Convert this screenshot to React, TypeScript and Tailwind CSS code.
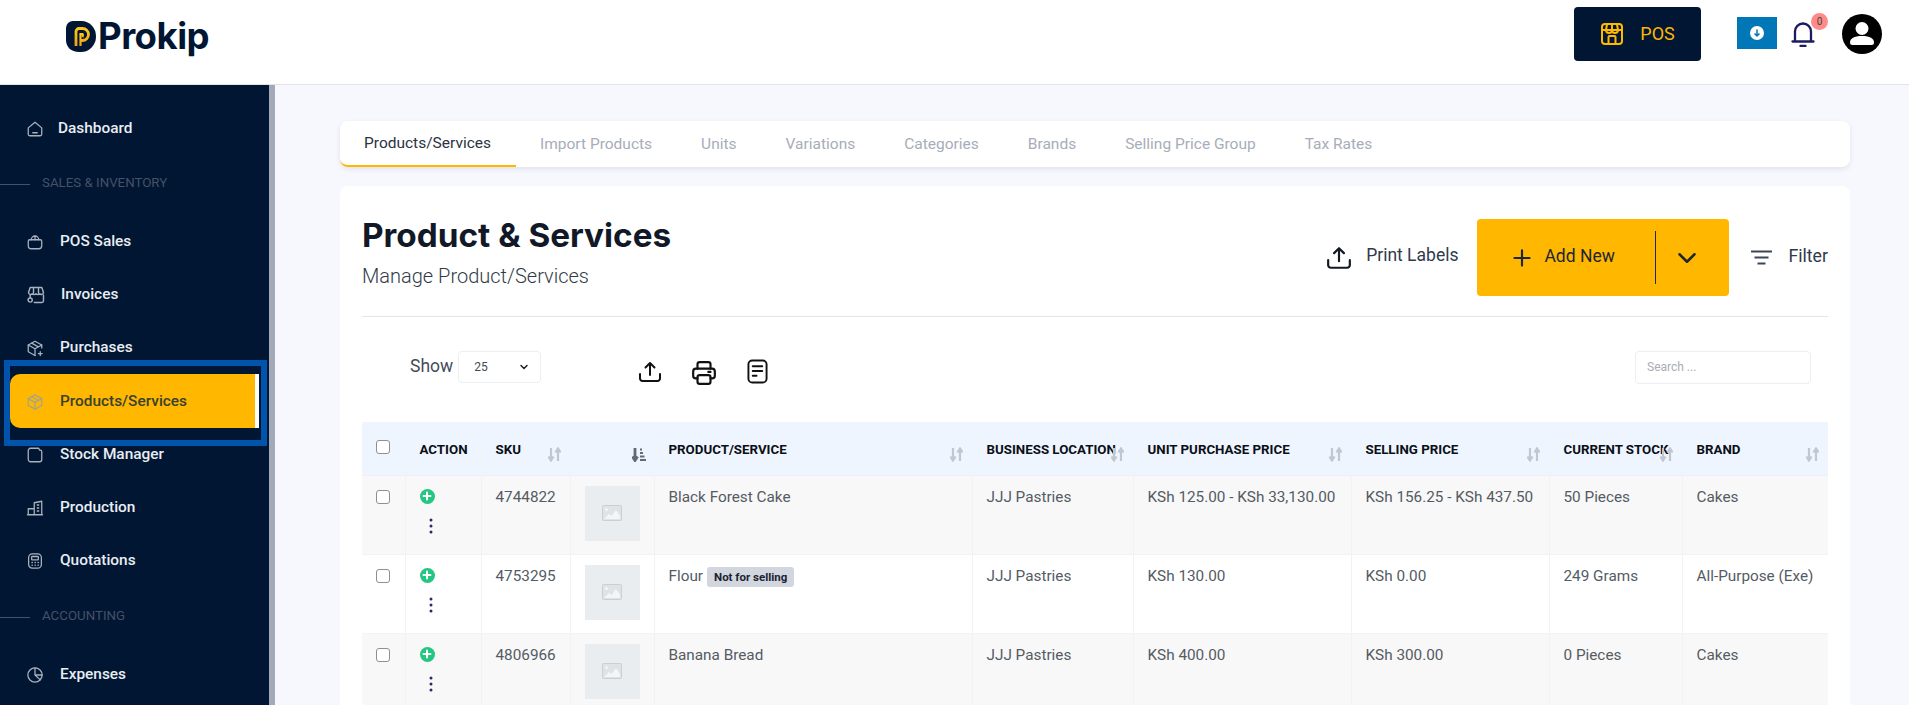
import { ChevronDown, Plus } from "lucide-react";
import type { ReactNode } from "react";

const ic = "w-[18px] h-[18px] shrink-0 text-[#a9b1be]";

function Ico({ children, className = ic }: { children: ReactNode; className?: string }) {
  return (
    <svg viewBox="0 0 24 24" fill="none" stroke="currentColor" strokeWidth="1.7" strokeLinecap="round" strokeLinejoin="round" className={className}>
      {children}
    </svg>
  );
}

const HomeIcon = () => (
  <Ico>
    <path d="M3 10.500 12 3l9 7.500V19a2 2 0 0 1-2 2H5a2 2 0 0 1-2-2z" />
    <path d="M9 17h6" />
  </Ico>
);
const BagIcon = () => (
  <Ico>
    <path d="M5 9h14a2 2 0 0 1 2 2v6a4 4 0 0 1-4 4H7a4 4 0 0 1-4-4v-6a2 2 0 0 1 2-2z" />
    <path d="M7 9a5 5 0 0 1 10 0M12 4v5" />
  </Ico>
);
const StoreIcon = () => (
  <Ico className="w-[20px] h-[20px] shrink-0 text-[#a9b1be]">
    <path d="M5 3h14l2 6a2.600 2.600 0 0 1-4.500 1.500 3 3 0 0 1-4.500 0 3 3 0 0 1-4.500 0A2.600 2.600 0 0 1 3 9z" />
    <path d="M9 3v7M15 3v7M5 12v3M10 21h9a2 2 0 0 0 2-2v-7" />
    <circle cx="5" cy="18" r="2.500" />
  </Ico>
);
const BoxPlusIcon = () => (
  <Ico>
    <path d="M21 12V8l-9-5-9 5v9l9 5" />
    <path d="m3 8 9 5 9-5M12 13v9M7.500 5.500l9 5" />
    <path d="M19 17v5M16.500 19.500h5" />
  </Ico>
);
const BoxIcon = () => (
  <Ico className="w-[18px] h-[18px] shrink-0 text-[#a8a48a]">
    <path d="m12 2.500 9 5v9l-9 5-9-5v-9z" />
    <path d="m3 7.500 9 5 9-5M12 12.500v9M7.500 5l9 5" />
  </Ico>
);
const FolderIcon = () => (
  <Ico>
    <path d="M6 3h11l1 2.500h1a2 2 0 0 1 2 2V18a3 3 0 0 1-3 3H6a3 3 0 0 1-3-3V6a3 3 0 0 1 3-3z" />
  </Ico>
);
const BuildingIcon = () => (
  <Ico>
    <path d="M3 21V13h8M11 21V5l10-2v18zM2 21h20" />
    <path d="M15 8h2M15 12h2M15 16h2" />
  </Ico>
);
const CalcIcon = () => (
  <Ico>
    <rect x="3.500" y="2.500" width="17" height="19" rx="5" />
    <rect x="7.500" y="6" width="9" height="4.500" rx="1" />
    <path d="M8 14h.500M12 14h.500M16 14h.500M8 17.500h.500M12 17.500h.500M16 17.500h.500" />
  </Ico>
);
const PieIcon = () => (
  <Ico>
    <circle cx="12" cy="12" r="9.500" />
    <path d="M12 2.500V12l7 6.500M12 12h9.500" />
  </Ico>
);

const UploadIcon = ({ className }: { className: string }) => (
  <svg viewBox="0 0 24 24" fill="none" stroke="currentColor" strokeWidth="2" strokeLinecap="round" strokeLinejoin="round" className={className}>
    <path d="M12 15V3M7.500 7.500 12 3l4.500 4.500" />
    <path d="M2 14v4.500A2.500 2.500 0 0 0 4.500 21h15a2.500 2.500 0 0 0 2.500-2.500V14" />
  </svg>
);

const SortIcon = () => (
  <svg viewBox="0 0 13 15" className="absolute right-[9px] top-[25px] w-[13px] h-[15px] text-[#c2c7cf]" fill="none" stroke="currentColor" strokeWidth="2.200">
    <path d="M3 1v12M.4 9.500 3 13.500l2.600-4" />
    <path d="M10 14V2M7.400 5.500 10 1.500l2.600 4" />
  </svg>
);

const SortActiveIcon = () => (
  <svg viewBox="0 0 14 15" className="absolute right-[8px] top-[25px] w-[14px] h-[15px] text-[#646a73]" fill="none" stroke="currentColor" strokeWidth="2.800">
    <path d="M3 1v12M.4 9.500 3 13.500l2.600-4" />
    <path d="M8 2.500h2M8 6h3M8 9.500h4.500M8 13h6" strokeWidth="2.200" />
  </svg>
);

const PhotoIcon = () => (
  <svg viewBox="0 0 20 16" className="w-5 h-4 text-[#c9cfd4]">
    <rect x="0.500" y="0.500" width="19" height="15" rx="1" fill="#dfe3e6" stroke="currentColor" />
    <circle cx="4.500" cy="4.500" r="1.500" fill="#f4f5f6" />
    <path d="M2 14l5-5 2.500 2L14 5l4 6v3z" fill="#f4f5f6" />
  </svg>
);

const AddCircle = () => (
  <span className="w-[15px] h-[15px] rounded-full bg-[#24c781] flex items-center justify-center">
    <Plus className="w-3 h-3 text-white" strokeWidth={4} />
  </span>
);

function NavItem({ icon, label, gap = "gap-[14px]" }: { icon: ReactNode; label: string; gap?: string }) {
  return (
    <div className={`h-[53px] flex items-center pl-[26px] pt-[1px] ${gap} text-[15.400px] font-medium text-[#e9edf2]`}>
      {icon}
      <span>{label}</span>
    </div>
  );
}

function NavLabel({ text, className }: { text: string; className: string }) {
  return (
    <div className={`flex items-center gap-[12px] text-[13.300px] text-[#465166] ${className}`}>
      <span className="w-[30px] h-px bg-[#465166] mt-[3px]" />
      <span>{text}</span>
    </div>
  );
}

const headers = [
  { label: "", w: "w-[43px]" },
  { label: "ACTION", w: "w-[76px]" },
  { label: "SKU", w: "w-[89px]", sort: true },
  { label: "", w: "w-[84px]", active: true },
  { label: "PRODUCT/SERVICE", w: "w-[318px]", sort: true },
  { label: "BUSINESS LOCATION", w: "w-[161px]", sort: true },
  { label: "UNIT PURCHASE PRICE", w: "w-[218px]", sort: true },
  { label: "SELLING PRICE", w: "w-[198px]", sort: true },
  { label: "CURRENT STOCK", w: "w-[133px]", sort: true },
  { label: "BRAND", w: "w-[146px]", sort: true },
];

const rows = [
  { sku: "4744822", name: "Black Forest Cake", buy: "KSh 125.00 - KSh 33,130.00", sell: "KSh 156.25 - KSh 437.50", stock: "50 Pieces", brand: "Cakes" },
  { sku: "4753295", name: "Flour", flag: true, buy: "KSh 130.00", sell: "KSh 0.00", stock: "249 Grams", brand: "All-Purpose (Exe)" },
  { sku: "4806966", name: "Banana Bread", buy: "KSh 400.00", sell: "KSh 300.00", stock: "0 Pieces", brand: "Cakes" },
];

const tabs = ["Import Products", "Units", "Variations", "Categories", "Brands", "Selling Price Group", "Tax Rates"];

export default function App() {
  return (
    <div className="h-[705px] overflow-hidden flex flex-col bg-[#f7f8fe] font-['Roboto',sans-serif] text-[#111827]">
      <header className="h-[85px] shrink-0 bg-white border-b border-[#e2e3ea] flex items-center">
        <div className="ml-[66px] flex items-center -mt-[12px]">
          <svg viewBox="0 0 30 31" className="w-[30px] h-[31px]">
            <defs>
              <linearGradient id="pmark" x1="0" y1="0" x2="0" y2="1">
                <stop offset="0" stopColor="#ffc61a" />
                <stop offset="1" stopColor="#f2a20c" />
              </linearGradient>
            </defs>
            <path d="M7 0h8.500A14.500 15.500 0 0 1 30 15.500 15 15.500 0 0 1 15 31h-2C5 31 0 26 0 19V7a7 7 0 0 1 7-7z" fill="#001633" />
            <path d="M10 25V10.500a3 3 0 0 1 3-3h3.500a6 6 0 0 1 0 12H15" stroke="url(#pmark)" strokeWidth="2.800" fill="none" />
            <path d="M14.500 25V13h2a2.500 2.500 0 0 1 0 3" stroke="url(#pmark)" strokeWidth="2.200" fill="none" />
          </svg>
          <span className="font-['Inter',sans-serif] font-bold text-[36.500px] leading-none tracking-[-0.5px] text-[#001633] ml-[2px]">Prokip</span>
        </div>
        <div className="ml-auto flex items-center">
          <button className="w-[127px] h-[54px] rounded bg-[#001633] flex items-center justify-center gap-[16px] text-[18px] text-[#ffb700] -mt-[17px]">
            <svg viewBox="0 0 24 24" fill="none" stroke="currentColor" strokeWidth="2" strokeLinejoin="round" className="w-[24px] h-[24px]">
              <rect x="2" y="2" width="20" height="20" rx="3" />
              <path d="M2.500 8h19M7 2.500 6 8a3 3 0 0 0 6 0 3 3 0 0 0 6 0l-1-5.500M12 2.500V8" />
              <path d="M8.500 21.500V15a1 1 0 0 1 1-1h5a1 1 0 0 1 1 1v6.500" />
            </svg>
            <span>POS</span>
          </button>
          <div className="ml-[36px] w-[40px] h-[32px] bg-[#0077b6] flex items-center justify-center -mt-[19px]">
            <span className="w-[14px] h-[14px] rounded-full bg-white flex items-center justify-center">
              <svg viewBox="0 0 10 10" className="w-[10px] h-[10px] text-[#0077b6]" fill="none" stroke="currentColor" strokeWidth="1.500">
                <path d="M5 1.500v6.500M2.500 5.500 5 8l2.500-2.500" />
              </svg>
            </span>
          </div>
          <div className="relative ml-[14px] w-[24px] h-[26px] -mt-[17px]">
            <svg viewBox="0 0 24 26" fill="none" stroke="#1c1c5e" strokeWidth="2.300" strokeLinecap="round" className="w-[24px] h-[26px]">
              <path d="M1.500 20.500h21M4 20.500V10.500a8 8 0 0 1 16 0v10M9.500 25h5" />
            </svg>
            <span className="absolute -top-[8px] left-[20px] w-[17px] h-[17px] rounded-full bg-[#ff8a8a] text-[#444] text-[10px] flex items-center justify-center">0</span>
          </div>
          <svg viewBox="0 0 40 40" className="ml-[27px] mr-[27px] w-[40px] h-[40px] -mt-[16px]">
            <circle cx="20" cy="20" r="20" fill="#000" />
            <circle cx="20" cy="14.500" r="6.500" fill="#fff" />
            <path d="M8 28.500c0-4 4-6.500 12-6.500s12 2.500 12 6.500a2.500 2.500 0 0 1-2.500 2.500h-19A2.500 2.500 0 0 1 8 28.500z" fill="#fff" />
          </svg>
        </div>
      </header>

      <div className="flex-1 flex min-h-0">
        <aside className="relative w-[275px] shrink-0 bg-[#001633] border-r-[6px] border-[#a3a9b8] pt-[17px]">
          <NavItem icon={<HomeIcon />} label="Dashboard" gap="gap-[14px]" />
          <NavLabel text="SALES & INVENTORY" className="h-[54px] mb-[6px] pt-[2px]" />
          <NavItem icon={<BagIcon />} label="POS Sales" gap="gap-[16px]" />
          <NavItem icon={<StoreIcon />} label="Invoices" gap="gap-[15px]" />
          <NavItem icon={<BoxPlusIcon />} label="Purchases" gap="gap-[16px]" />
          <div className="h-[54px] flex items-center ml-[10px] w-[249px] pl-[16px] pt-[2px] gap-[16px] rounded-l-[10px] bg-[#ffb700] border-r-[4px] border-white text-[15.400px] font-medium text-[#38412f]">
            <BoxIcon />
            <span>Products/Services</span>
          </div>
          <NavItem icon={<FolderIcon />} label="Stock Manager" gap="gap-[16px]" />
          <NavItem icon={<BuildingIcon />} label="Production" gap="gap-[16px]" />
          <NavItem icon={<CalcIcon />} label="Quotations" gap="gap-[16px]" />
          <NavLabel text="ACCOUNTING" className="h-[58px] mb-[3px]" />
          <NavItem icon={<PieIcon />} label="Expenses" gap="gap-[16px]" />
          <div className="absolute left-[4px] top-[275px] w-[263px] h-[86px] border-[6px] border-[#0054ab]" />
        </aside>

        <main className="flex-1 min-w-0 pl-[65px] pr-[59px] pt-[36px]">
          <nav className="h-[46px] bg-white rounded-lg shadow-[0_2px_5px_rgba(30,40,80,0.1)] flex text-[15.500px] text-[#a7adb9]">
            <div className="h-full w-[176px] pl-[24px] pt-[11px] border-b-[2px] border-[#ffb700] text-[#2a3342] whitespace-nowrap rounded-bl-lg">Products/Services</div>
            <div className="flex gap-[49px] pl-[24px] pt-[12px]">
              {tabs.map((t) => (
                <span key={t} className="whitespace-nowrap">{t}</span>
              ))}
            </div>
          </nav>

          <section className="mt-[19px] bg-white rounded-t-lg px-[22px] h-[600px]">
            <div className="h-[131px] border-b border-[#e5e6ea] flex">
              <div className="pt-[29px]">
                <h1 className="font-['Inter',sans-serif] font-bold text-[33.300px] leading-[40px] text-[#111827]">Product &amp; Services</h1>
                <p className="mt-[9px] text-[20px] font-light leading-[24px] text-[#333b47]">Manage Product/Services</p>
              </div>
              <div className="ml-auto flex items-start pt-[33px] h-[110px]">
                <div className="flex items-center h-[77px] text-[17.500px] text-[#2f3a4c]">
                  <UploadIcon className="w-[26px] h-[26px] text-[#111827] mt-[1px]" />
                  <span className="ml-[14px] mb-[4px]">Print Labels</span>
                </div>
                <button className="ml-[19px] w-[252px] h-[77px] rounded bg-[#ffb700] flex items-center text-[17.500px] text-[#1d2633]">
                  <Plus className="ml-[32px] w-[26px] h-[26px]" strokeWidth={2} />
                  <span className="ml-[9px] mb-[2px]">Add New</span>
                  <span className="ml-[40px] w-px h-[53px] bg-[#1d2c4a]" />
                  <ChevronDown className="ml-[16px] w-[30px] h-[30px]" strokeWidth={2} />
                </button>
                <div className="ml-[22px] flex items-center h-[77px] text-[17.700px] text-[#2f3a4c]">
                  <svg viewBox="0 0 21 15" fill="none" stroke="#3d4656" strokeWidth="2.200" className="w-[21px] h-[15px]">
                    <path d="M0 1.500h21M3.500 7.500h14M6.500 13.500h8" />
                  </svg>
                  <span className="ml-[16px] mb-[2px]">Filter</span>
                </div>
              </div>
            </div>

            <div className="h-[105px] flex items-start pt-[34px]">
              <span className="ml-[48px] mt-[5px] text-[17.500px] text-[#444c58] leading-[20px]">Show</span>
              <div className="ml-[5px] w-[83px] h-[32px] border border-[#eceef1] rounded flex items-center justify-between pl-[15px] pr-[10px] text-[12px] text-[#444c58]">
                <span>25</span>
                <ChevronDown className="w-[12px] h-[12px] text-[#222]" strokeWidth={3} />
              </div>
              <UploadIcon className="ml-[97px] mt-[9px] w-[24px] h-[24px] text-[#111]" />
              <svg viewBox="0 0 24 24" fill="none" stroke="#111" strokeWidth="2" strokeLinecap="round" strokeLinejoin="round" className="ml-[29px] mt-[9px] w-[26px] h-[26px]">
                <path d="M6 8V4a2 2 0 0 1 2-2h8a2 2 0 0 1 2 2v4" />
                <path d="M6 17H4.500A2.500 2.500 0 0 1 2 14.500v-4A2.500 2.500 0 0 1 4.500 8h15a2.500 2.500 0 0 1 2.500 2.500v4a2.500 2.500 0 0 1-2.500 2.500H18" />
                <rect x="6" y="14" width="12" height="8" rx="2" />
                <path d="M16 11h2" />
              </svg>
              <svg viewBox="0 0 22 26" fill="none" stroke="#111" strokeWidth="2" strokeLinecap="round" className="ml-[30px] mt-[8px] w-[21px] h-[25px]">
                <rect x="1.500" y="1.500" width="19" height="23" rx="4" />
                <path d="M6 7.500h10M6 12.500h10M6 17.500h4" />
              </svg>
              <div className="ml-auto mr-[17px] w-[176px] h-[33px] border border-[#eceef1] rounded px-[11px] pb-[2px] flex items-center text-[12px] text-[#a9adb4]">Search ...</div>
            </div>

            <table className="w-[1466px] table-fixed border-collapse text-[15.300px] text-[#555b63]">
              <thead>
                <tr className="h-[53px] bg-[#eff5fe] border-b border-[#eef0f4]">
                  {headers.map((h, i) => (
                    <th key={i} className={`${h.w} relative text-left align-top pt-[19px] pl-[14px] pr-0 text-[13.300px] leading-[18px] font-bold text-[#0b0f17] border-r border-[#f1f4f9] last:border-r-0 whitespace-nowrap`}>
                      {i === 0 && <span className="block w-[14px] h-[14px] -mt-[1px] border border-[#8b8f96] rounded-[3px] bg-white" />}
                      {h.label}
                      {h.sort && <SortIcon />}
                      {h.active && <SortActiveIcon />}
                    </th>
                  ))}
                </tr>
              </thead>
              <tbody>
                {rows.map((r, idx) => (
                  <tr key={r.sku} className={`h-[79px] align-top border-b border-[#f2f3f5] ${idx % 2 === 0 ? "bg-[#f8f8f8]" : "bg-white"}`}>
                    <td className="pl-[14px] pt-[14px] border-r border-[#f1f2f4]">
                      <span className="block w-[14px] h-[14px] border border-[#8b8f96] rounded-[3px] bg-white" />
                    </td>
                    <td className="pl-[14px] pt-[13px] border-r border-[#f1f2f4]">
                      <AddCircle />
                      <svg viewBox="0 0 4 16" className="mt-[14px] ml-[9px] w-[4px] h-[16px] text-[#2a2a66]" fill="currentColor">
                        <circle cx="2" cy="2" r="1.500" />
                        <circle cx="2" cy="8" r="1.500" />
                        <circle cx="2" cy="14" r="1.500" />
                      </svg>
                    </td>
                    <td className="pl-[14px] pt-[11px] leading-[20px] border-r border-[#f1f2f4]">{r.sku}</td>
                    <td className="pl-[14px] pt-[10px] border-r border-[#f1f2f4]">
                      <div className="w-[55px] h-[55px] bg-[#e9edf0] flex items-center justify-center">
                        <PhotoIcon />
                      </div>
                    </td>
                    <td className="pl-[14px] pt-[11px] leading-[20px] border-r border-[#f1f2f4] whitespace-nowrap">
                      {r.name}
                      {r.flag && (
                        <span className="ml-[4px] inline-block align-top mt-[1px] h-[20px] px-[7px] rounded-[3px] bg-[#d2d6df] text-[11.500px] leading-[20px] font-bold text-[#1b2330]">Not for selling</span>
                      )}
                    </td>
                    <td className="pl-[14px] pt-[11px] leading-[20px] border-r border-[#f1f2f4] whitespace-nowrap">JJJ Pastries</td>
                    <td className="pl-[14px] pt-[11px] leading-[20px] border-r border-[#f1f2f4] whitespace-nowrap">{r.buy}</td>
                    <td className="pl-[14px] pt-[11px] leading-[20px] border-r border-[#f1f2f4] whitespace-nowrap">{r.sell}</td>
                    <td className="pl-[14px] pt-[11px] leading-[20px] border-r border-[#f1f2f4] whitespace-nowrap">{r.stock}</td>
                    <td className="pl-[14px] pt-[11px] leading-[20px] whitespace-nowrap">{r.brand}</td>
                  </tr>
                ))}
              </tbody>
            </table>
          </section>
        </main>
      </div>
    </div>
  );
}
